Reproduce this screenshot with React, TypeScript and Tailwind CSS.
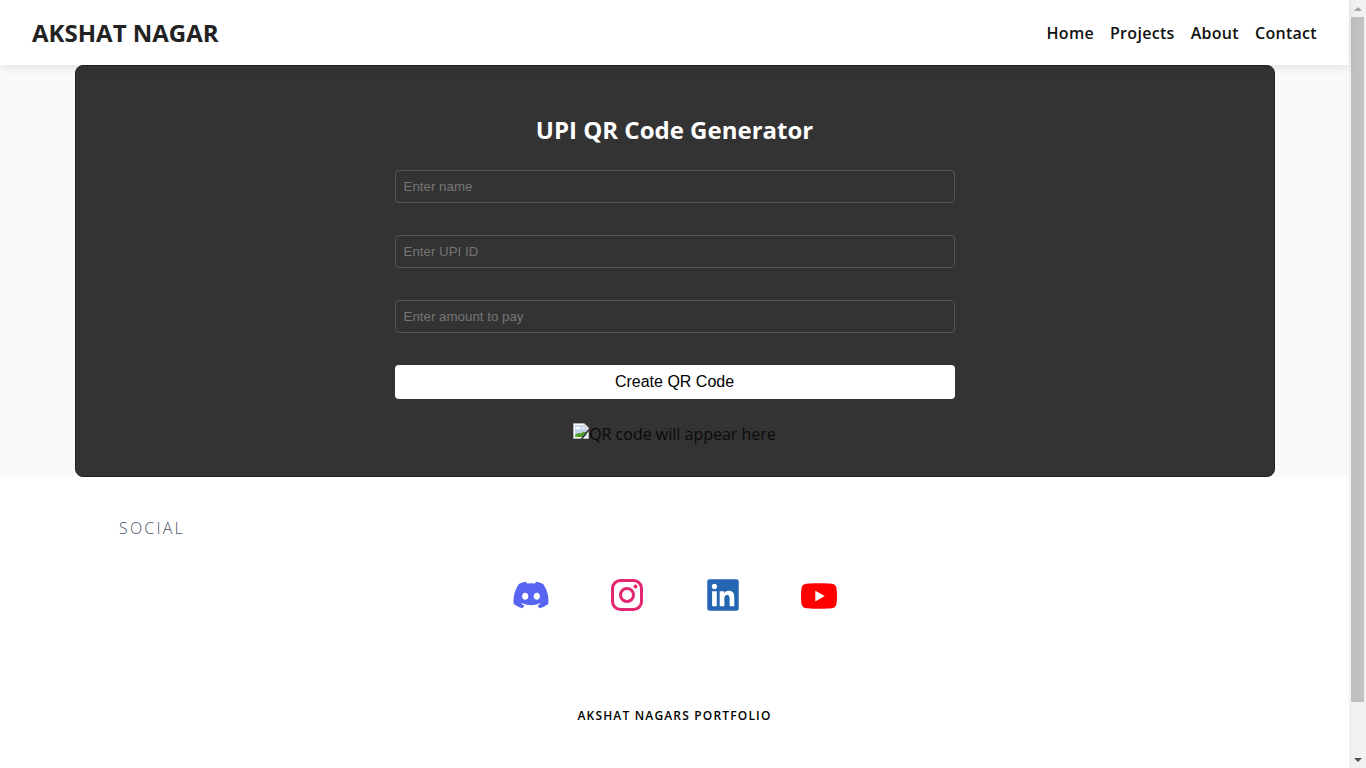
import { FaDiscord, FaLinkedin, FaYoutube } from "react-icons/fa";

const fields = ["Enter name", "Enter UPI ID", "Enter amount to pay"];
const navLinks = ["Home", "Projects", "About", "Contact"];

function BrokenImage() {
  return (
    <svg width="16" height="16" viewBox="0 0 16 16" className="shrink-0 self-start">
      <path d="M0.5 0.5H11L15.5 5V15.5H0.5Z" fill="#fff" stroke="#b0b0b0" />
      <path d="M11 0.5V5H15.5Z" fill="#e8e8e8" stroke="#b0b0b0" strokeWidth="0.6" />
      <path d="M2 2H10V6H14V14H2Z" fill="#c3d3ee" />
      <path d="M3 4.5c1-1.4 3-1.4 4 0 1.2.2 1.2 1.6 0 1.8H3c-1-.2-1-1.6 0-1.8Z" fill="#fff" />
      <path d="M2 14V12.5C4 10 6 9.5 7.5 10.5L11 8.5 13 9.5 9 14Z" fill="#55a02a" />
      <path d="M16 6.5 8.5 16" stroke="#333" strokeWidth="1.6" />
    </svg>
  );
}

function InstagramIcon() {
  return (
    <svg width="32" height="32" viewBox="0 0 32 32" fill="none" stroke="#e4266f">
      <rect x="1.5" y="1.5" width="29" height="29" rx="8" strokeWidth="3" />
      <circle cx="16" cy="16" r="6.5" strokeWidth="3" />
      <circle cx="24.5" cy="7.5" r="2" fill="#e4266f" stroke="none" />
    </svg>
  );
}

function Scrollbar() {
  return (
    <div className="flex h-full w-[17px] shrink-0 flex-col items-center bg-[#f1f1f1]">
      <div className="flex h-[17px] w-full items-center justify-center">
        <div className="h-0 w-0 border-x-[4px] border-b-[4px] border-x-transparent border-b-[#a3a3a3]" />
      </div>
      <div className="h-[685px] w-[13px] bg-[#c1c1c1]" />
      <div className="flex-1" />
      <div className="flex h-[17px] w-full items-center justify-center">
        <div className="h-0 w-0 border-x-[4px] border-t-[4px] border-x-transparent border-t-[#505050]" />
      </div>
    </div>
  );
}

export default function App() {
  return (
    <div className="flex h-[768px] overflow-hidden bg-white font-['Open_Sans',sans-serif]">
      <div className="flex min-w-0 flex-1 flex-col">
        <header className="relative z-10 flex h-[65px] shrink-0 items-center justify-between bg-white pl-8 pr-8 shadow-[0_2px_10px_rgba(0,0,0,0.1)]">
          <div className="text-2xl font-bold text-[#222]">AKSHAT NAGAR</div>
          <nav className="flex gap-4 text-base font-semibold tracking-[0.3px] text-[#111]">
            {navLinks.map((link) => (
              <a key={link}>{link}</a>
            ))}
          </nav>
        </header>

        <section className="flex justify-center bg-[#f9f9f9]">
          <div className="flex h-[412px] w-[1200px] flex-col items-center rounded-lg border border-[#222] bg-[#333] pt-[46px]">
            <h1 className="h-9 text-2xl leading-9 font-bold text-white">UPI QR Code Generator</h1>
            <div className="mt-[22px] flex w-[560px] flex-col gap-8 font-['Liberation_Sans',sans-serif]">
              {fields.map((field) => (
                <input
                  key={field}
                  placeholder={field}
                  className="h-[33px] rounded border border-[#555] bg-[#333] px-2 text-[13.33px] text-white placeholder:text-[#757575]"
                />
              ))}
              <button
                type="button"
                className="h-[34px] rounded bg-white text-base text-black"
              >
                Create QR Code
              </button>
            </div>
            <div className="mt-6 flex h-[22px] items-start text-base leading-[22px] text-[#0a0a0a]">
              <BrokenImage />
              <span>QR code will appear here</span>
            </div>
          </div>
        </section>

        <footer className="flex-1 bg-white">
          <div className="pt-10 pl-[119px] text-base leading-[22px] font-light tracking-[2.2px] text-[#4a5568]">SOCIAL</div>
          <div className="mt-[38px] flex h-9 items-center justify-center gap-12">
            <div className="flex w-12 justify-center">
              <FaDiscord size={38} color="#5865f2" />
            </div>
            <div className="flex w-12 justify-center">
              <InstagramIcon />
            </div>
            <div className="flex w-12 justify-center">
              <FaLinkedin size={36} color="#2466b2" />
            </div>
            <div className="flex w-12 translate-y-px justify-center">
              <FaYoutube size={38} color="#ff0000" />
            </div>
          </div>
          <div className="mt-[95px] text-center text-xs font-semibold tracking-[1.17px] text-black">AKSHAT NAGARS PORTFOLIO</div>
        </footer>
      </div>
      <Scrollbar />
    </div>
  );
}
